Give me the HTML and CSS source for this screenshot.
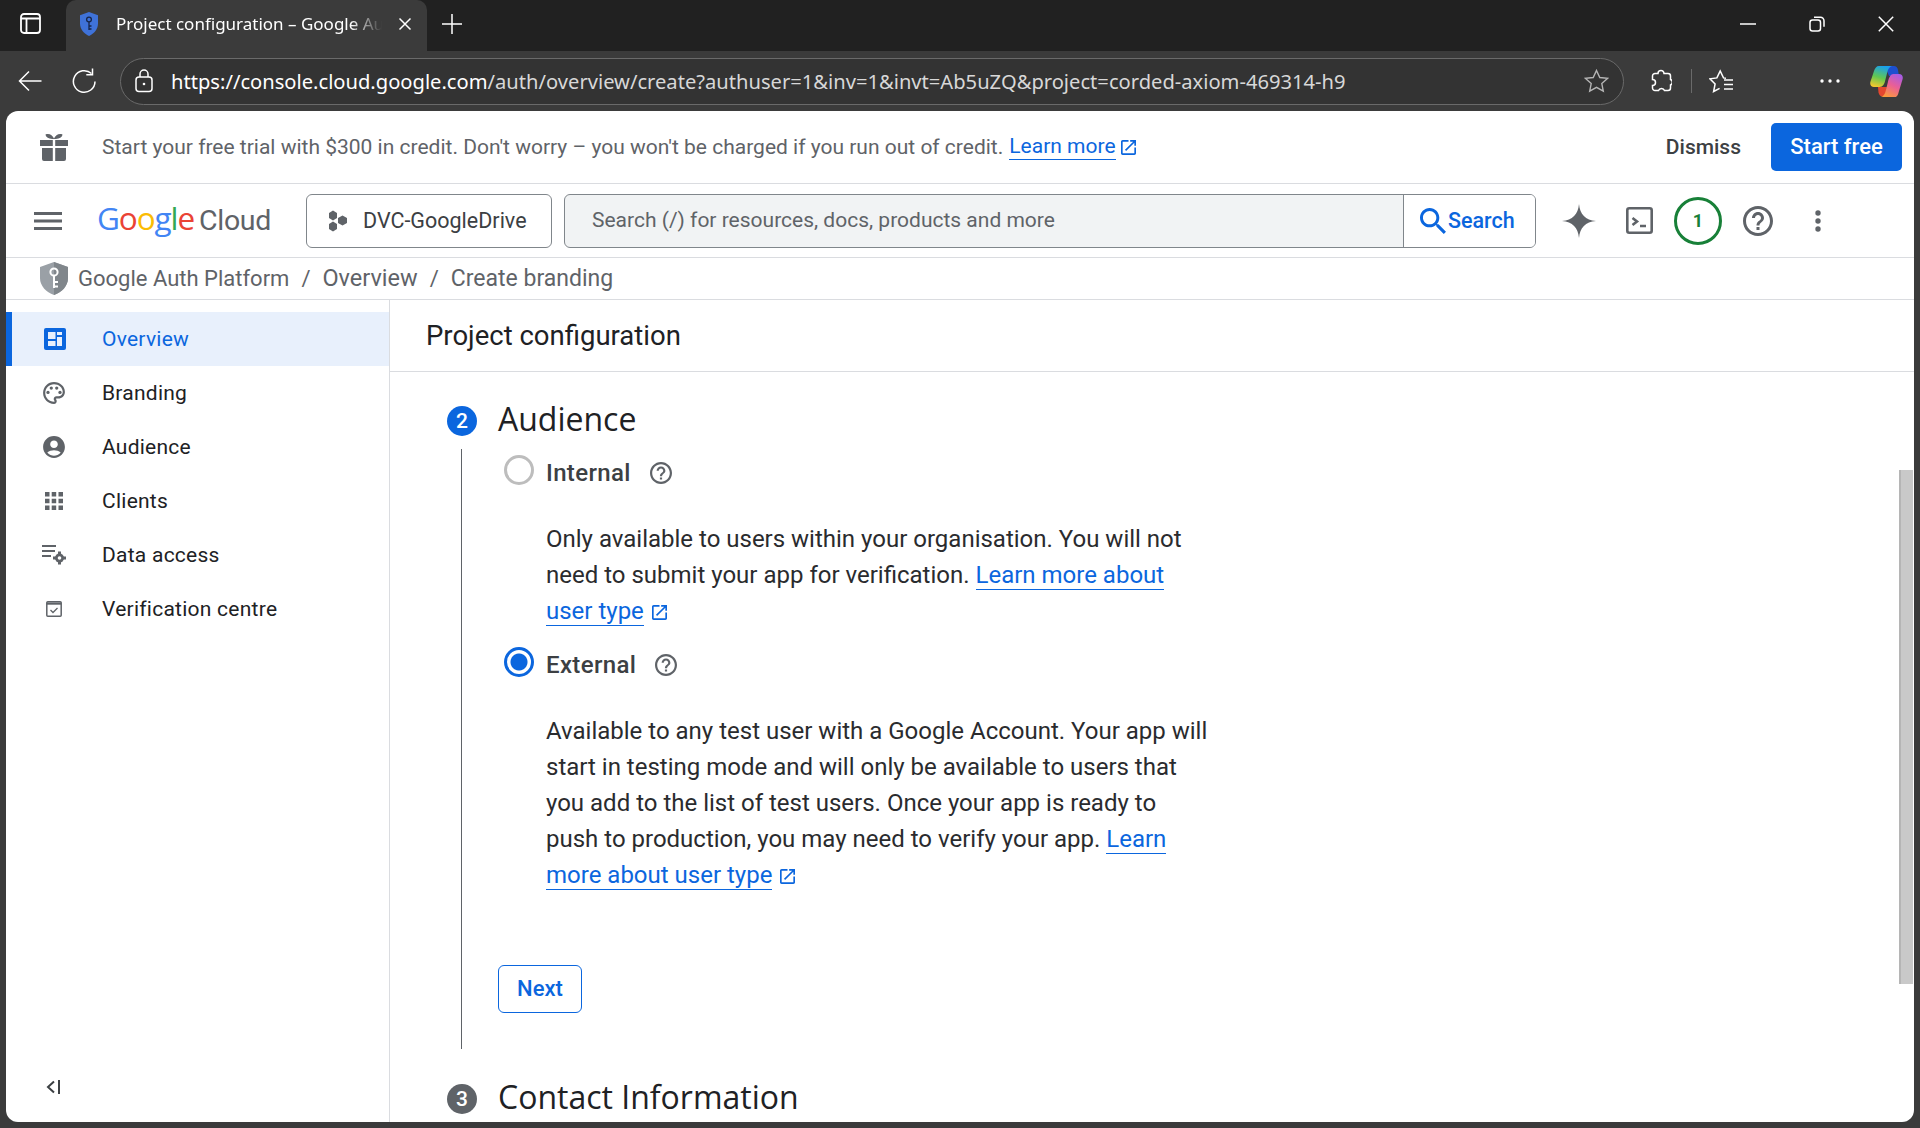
FILE: index.html
```html
<!DOCTYPE html>
<html lang="en">
    <head>
        <meta charset="utf-8" />
        <title>Project configuration</title>
        <link rel="stylesheet" href="styles.css">
    </head>
    <body>
        <svg class="defs" width="0" height="0">
            <symbol id="help" viewBox="2 2 20 20"><path d="M11 18h2v-2h-2v2zm1-16C6.48 2 2 6.48 2 12s4.48 10 10 10 10-4.48 10-10S17.52 2 12 2zm0 18c-4.41 0-8-3.59-8-8s3.59-8 8-8 8 3.59 8 8-3.59 8-8 8zm0-14c-2.21 0-4 1.79-4 4h2c0-1.1.9-2 2-2s2 .9 2 2c0 2-3 1.75-3 5h2c0-2.25 3-2.5 3-5 0-2.21-1.79-4-4-4z"/></symbol>
            <symbol id="open" viewBox="3 3 18 18"><path d="M19 19H5V5h7V3H5c-1.11 0-2 .9-2 2v14c0 1.1.89 2 2 2h14c1.1 0 2-.9 2-2v-7h-2v7zM14 3v2h3.59l-9.83 9.83 1.41 1.41L19 6.41V10h2V3h-7z"/></symbol>
        </svg>

        <!-- browser tabs -->
        <div class="tabstrip">
            <svg class="side-btn" width="21" height="21" viewBox="0 0 21 21" fill="none" stroke="#fff" stroke-width="1.8"><rect x="1" y="1" width="19" height="19" rx="3"/><path d="M1 5.5h19M6.5 5.5V20"/></svg>
            <div class="tab">
                <svg width="20" height="24" viewBox="0 0 20 24"><path d="M10 0l9 3.2v8.3c0 5.6-3.8 10.2-9 12.500-5.200-2.300-9-6.900-9-12.500V3.200z" fill="#3f72d8"/><circle cx="10" cy="7.5" r="2.4" fill="none" stroke="#16264a" stroke-width="1.3"/><path d="M10 10v8M10 14h2.500M10 17h2.500" stroke="#16264a" stroke-width="1.3"/></svg>
                <span class="tab-title">Project configuration – Google Auth Platform</span>
                <svg width="14" height="14" viewBox="0 0 14 14" stroke="#fff" stroke-width="1.5"><path d="M1.500 1.500l11 11M12.500 1.500l-11 11"/></svg>
            </div>
            <svg class="new-tab" width="22" height="22" viewBox="0 0 22 22" stroke="#fff" stroke-width="1.5"><path d="M11 1v20M1 11h20"/></svg>
            <div class="win-btns">
                <svg width="16" height="16" viewBox="0 0 16 16" stroke="#fff" stroke-width="1.5"><path d="M0 8h16"/></svg>
                <svg width="16" height="16" viewBox="0 0 16 16" fill="none" stroke="#fff" stroke-width="1.5"><rect x="1" y="4" width="10.5" height="11" rx="2.5"/><path d="M5 1.200h6.500a3.500 3.500 0 0 1 3.500 3.500v6"/></svg>
                <svg width="16" height="16" viewBox="0 0 16 16" stroke="#fff" stroke-width="1.5"><path d="M.8.8l14.400 14.400M15.200.8L.8 15.200"/></svg>
            </div>
        </div>

        <!-- address bar -->
        <div class="toolbar">
            <svg width="24" height="22" viewBox="0 0 24 22" fill="none" stroke="#fff" stroke-width="1.5"><path d="M23.500 11H1.500M11 1.500L1.500 11l9.500 9.500"/></svg>
            <svg class="reload" width="24" height="26" viewBox="0 0 24 26" fill="none" stroke="#fff" stroke-width="1.5"><path d="M19.500 5.500A10.800 10.800 0 1 0 23 13.500"/><path d="M20.500.5v6.200h-6.200"/></svg>
            <div class="urlbar">
                <svg width="18" height="24" viewBox="0 0 18 24" fill="none" stroke="#fff" stroke-width="1.5"><rect x="1" y="8" width="16" height="14.5" rx="3"/><path d="M5 8V5a4 4 0 0 1 8 0v3"/><circle cx="9" cy="15" r="1.3" fill="#fff" stroke="none"/></svg>
                <span class="url"><span class="url-host">https://console.cloud.google.com</span>/auth/overview/create?authuser=1&amp;inv=1&amp;invt=Ab5uZQ&amp;project=corded-axiom-469314-h9</span>
                <svg width="25" height="24" viewBox="0 0 25 24" fill="none" stroke="#b5b5b5" stroke-width="1.4"><path d="M12.500 1.500l3.300 7 7.700.9-5.700 5.200 1.500 7.600-6.800-3.800-6.800 3.800 1.500-7.600L1.500 9.400l7.700-.9z"/></svg>
            </div>
            <svg class="ext" width="22" height="24" viewBox="0 0 22 24" fill="none" stroke="#fff" stroke-width="1.5"><path d="M8 4.500a3 3 0 0 1 6 0h4a2.500 2.500 0 0 1 2.500 2.500v3.500a3 3 0 0 1 0 5.500V19a2.500 2.500 0 0 1-2.500 2.500h-3.500a3.200 3.200 0 0 0-6 0H5A2.500 2.500 0 0 1 2.500 19v-2.500a3 3 0 0 0 0-6V7A2.500 2.500 0 0 1 5 4.500z"/></svg>
            <span class="tool-sep"></span>
            <svg class="fav" width="25" height="24" viewBox="0 0 25 24" fill="none" stroke="#fff" stroke-width="1.5"><path d="M17 9.200l-2.500-.3-3.300-7-3.300 7-7 .9 5.200 5.200-1.500 7.500 6-3.200"/><path d="M15 11h9M15 15.500h9M15 20h9"/></svg>
            <svg class="more" width="20" height="4" viewBox="0 0 20 4" fill="#fff"><circle cx="2" cy="2" r="1.7"/><circle cx="10" cy="2" r="1.7"/><circle cx="18" cy="2" r="1.7"/></svg>
            <svg class="copilot" width="33" height="31" viewBox="0 0 33 31">
                <defs>
                    <linearGradient id="cop1" x1="0.6" y1="0" x2="0.3" y2="1"><stop offset="0" stop-color="#18a0f0"/><stop offset="0.55" stop-color="#62c850"/><stop offset="1" stop-color="#f4c82e"/></linearGradient>
                    <linearGradient id="cop2" x1="0.8" y1="0" x2="0.3" y2="1"><stop offset="0" stop-color="#a55ce6"/><stop offset="0.5" stop-color="#ea5f96"/><stop offset="1" stop-color="#fb9a3c"/></linearGradient>
                </defs>
                <path d="M8 21h9l-1 6c-.4 2-1.500 3.500-3.500 3.500-2.500 0-3.500-2-4-4z" fill="#e4472f"/>
                <path d="M15 0h9c2 0 3.500 1.500 4 4l1 6H19z" fill="#1d4fcf"/>
                <path d="M9 0h13c-2.500.8-4 3-4.800 6.500l-2 8C14.500 18 13 21 9.500 21H4C1 21-.5 18.500.5 15.500L4 5C5 2 6.500 0 9 0z" fill="url(#cop1)"/>
                <path d="M25 31H11c2.500-.8 4-3 4.800-6.500l2-8C18.500 13 20 8 23.500 8H29c3 0 4.500 2.500 3.500 5.500L29 25c-1 3.500-1.500 6-4 6z" fill="url(#cop2)"/>
            </svg>
        </div>

        <div class="page">
            <!-- free trial banner -->
            <div class="banner">
                <svg class="gift" width="28" height="28" viewBox="0 0 28 28" fill="#5f6368"><path d="M0 7h12.800v6H0zM15.200 7H28v6H15.200zM2 15h10.800v13H4a2 2 0 0 1-2-2zM15.200 15H26v11a2 2 0 0 1-2 2h-8.800z"/><path d="M13.500 6C10 6 6 5 5.500 1.500 9 0 12.500 2 14 5.500 15.500 2 19 0 22.500 1.500 22 5 18 6 14.500 6z"/></svg>
                <span class="banner-text">Start your free trial with $300 in credit. Don't worry – you won't be charged if you run out of credit.</span>
                <a class="link">Learn more</a>
                <svg class="ext-link" width="15" height="15" fill="#0b66de"><use href="#open"/></svg>
                <span class="dismiss">Dismiss</span>
                <span class="start-free">Start free</span>
            </div>

            <!-- cloud header -->
            <div class="header">
                <svg class="menu" width="28" height="18" viewBox="0 0 28 18" fill="#5f6368"><rect width="28" height="3"/><rect y="7.5" width="28" height="3"/><rect y="15" width="28" height="3"/></svg>
                <span class="logo"><span class="google"><span class="blue">G</span><span class="red">o</span><span class="yellow">o</span><span class="blue">g</span><span class="green">l</span><span class="red">e</span></span><span class="cloud">Cloud</span></span>
                <div class="project">
                    <svg width="21" height="22" viewBox="0 0 21 22" fill="#5f6368"><path d="M2 3l4-2.500L10 3v5l-4 2.500L2 8zM11 8l4.500-2.500L20 8v5l-4.500 2.500L11 13zM2 14l4-2.500L10 14v5l-4 2.500L2 19z"/></svg>
                    <span>DVC-GoogleDrive</span>
                </div>
                <div class="search">
                    <span class="search-text">Search (/) for resources, docs, products and more</span>
                    <span class="search-btn">
                        <svg width="26" height="26" viewBox="3 3 17.5 17.5" fill="#0b66de"><path d="M15.500 14h-.79l-.28-.27C15.410 12.590 16 11.110 16 9.500 16 5.910 13.090 3 9.500 3S3 5.910 3 9.500 5.910 16 9.500 16c1.610 0 3.090-.59 4.230-1.570l.27.28v.79l5 4.990L20.490 19l-4.990-5zm-6 0C7.010 14 5 11.990 5 9.500S7.010 5 9.500 5 14 7.010 14 9.500 11.990 14 9.500 14z"/></svg>
                        Search
                    </span>
                </div>
                <svg class="spark" width="34" height="34" viewBox="0 0 24 24" fill="#5f6368"><path d="M12 0C12.700 7.500 16.500 11.300 24 12 16.500 12.700 12.700 16.500 12 24 11.300 16.500 7.500 12.700 0 12 7.500 11.300 11.300 7.500 12 0z"/></svg>
                <svg class="term" width="27" height="27" viewBox="0 0 27 27" fill="none" stroke="#5f6368" stroke-width="2.6"><rect x="1.3" y="1.3" width="24.4" height="24.4" rx="2"/><path d="M6.500 11l4.500 3.500-4.500 3.500M14 19h6"/></svg>
                <span class="credit">1</span>
                <svg class="head-help" width="30" height="30" fill="#5f6368"><use href="#help"/></svg>
                <svg class="head-more" width="6" height="22" viewBox="0 0 6 22" fill="#5f6368"><circle cx="3" cy="3" r="2.7"/><circle cx="3" cy="11" r="2.7"/><circle cx="3" cy="19" r="2.7"/></svg>
            </div>

            <div class="crumbs">
                <svg width="28" height="33" viewBox="0 0 28 33"><path d="M14 0l14 5v11c0 8-6 14-14 17C6 30 0 24 0 16V5z" fill="#9aa0a6"/><path d="M14 0l14 5v11c0 8-6 14-14 17z" fill="#80868b"/><circle cx="14" cy="10" r="3.6" fill="none" stroke="#fff" stroke-width="2"/><path d="M14 13.500V26M14 20h4M14 24.500h4" stroke="#fff" stroke-width="2"/></svg>
                <span class="crumb-app">Google Auth Platform</span><span class="slash">/</span><span class="crumb-overview">Overview</span><span class="slash">/</span><span class="crumb-create">Create branding</span>
            </div>

            <div class="columns">
                <div class="sidebar">
                    <div class="nav-item active">
                        <svg width="22" height="22" viewBox="0 0 22 22"><rect width="22" height="22" rx="2" fill="#0b66de"/><path d="M4 4h7.500v7H4zM13 4h5v3h-5zM4 13h7.500v5H4zM13 9h5v9h-5z" fill="#e8f0fc"/></svg>
                        <span>Overview</span>
                    </div>
                    <div class="nav-item">
                        <svg width="24" height="24" viewBox="1 1 22 22" fill="#5f6368"><path d="M12 22C6.490 22 2 17.510 2 12S6.490 2 12 2s10 4.040 10 9c0 3.310-2.690 6-6 6h-1.770c-.28 0-.5.22-.5.5 0 .12.05.23.13.33.41.47.64 1.060.64 1.670 0 1.380-1.120 2.500-2.500 2.500zm0-18c-4.410 0-8 3.590-8 8s3.590 8 8 8c.28 0 .5-.22.5-.5 0-.16-.08-.28-.14-.35-.41-.46-.63-1.050-.63-1.650 0-1.380 1.120-2.500 2.500-2.500H16c2.210 0 4-1.790 4-4 0-3.860-3.590-7-8-7z"/><circle cx="6.5" cy="11.5" r="1.5"/><circle cx="9.5" cy="7.5" r="1.5"/><circle cx="14.5" cy="7.5" r="1.5"/><circle cx="17.5" cy="11.5" r="1.5"/></svg>
                        <span>Branding</span>
                    </div>
                    <div class="nav-item">
                        <svg width="24" height="24" viewBox="1 1 22 22" fill="#5f6368"><path d="M12 2C6.480 2 2 6.480 2 12s4.480 10 10 10 10-4.480 10-10S17.520 2 12 2zm0 4c1.930 0 3.500 1.570 3.500 3.500S13.930 13 12 13s-3.500-1.570-3.500-3.500S10.070 6 12 6zm0 14c-2.030 0-4.430-.82-6.140-2.880C7.550 15.800 9.680 15 12 15s4.450.8 6.140 2.120C16.430 19.180 14.030 20 12 20z"/></svg>
                        <span>Audience</span>
                    </div>
                    <div class="nav-item">
                        <svg width="20" height="20" viewBox="0 0 20 20" fill="#5f6368"><path d="M1 1h4.500v4.500H1zM7.700 1h4.500v4.500H7.700zM14.500 1H19v4.500h-4.500zM1 7.700h4.500v4.500H1zM7.700 7.700h4.500v4.500H7.700zM14.500 7.700H19v4.500h-4.500zM1 14.500h4.500V19H1zM7.700 14.500h4.500V19H7.700zM14.500 14.500H19V19h-4.500z"/></svg>
                        <span>Clients</span>
                    </div>
                    <div class="nav-item">
                        <svg width="24" height="20" viewBox="0 0 24 20" fill="#5f6368"><path d="M0 0h14v2H0zM0 5h13v2H0zM0 10h9v2H0z"/><circle cx="17.5" cy="13" r="4.5"/><path d="M16 6.500h3v13h-3zM11 11.500h13v3H11z"/><circle cx="17.5" cy="13" r="1.8" fill="#fff"/></svg>
                        <span>Data access</span>
                    </div>
                    <div class="nav-item">
                        <svg width="16" height="16" viewBox="0 0 16 16" fill="none" stroke="#5f6368" stroke-width="1.5"><rect x=".8" y=".8" width="14.4" height="14.4" rx="1"/><path d="M.8 2.600h14.400" stroke-width="2.2"/><path d="M4.500 9l2.500 2.500 4.500-4.500" stroke-width="1.3"/></svg>
                        <span>Verification centre</span>
                    </div>
                    <svg class="collapse" width="14" height="14" viewBox="0 0 14 14" fill="none" stroke="#3c4043" stroke-width="2"><path d="M8 1.500L2 7l6 5.500M13 0v14"/></svg>
                </div>

                <div class="main">
                    <div class="title-bar">Project configuration</div>
                    <div class="steps">
                        <div class="step-head">
                            <span class="step-num">2</span>
                            <span class="step-title">Audience</span>
                        </div>
                        <div class="step-body">
                            <div class="radio-row">
                                <span class="radio"></span>
                                <span class="radio-label">Internal</span>
                                <svg class="radio-help" width="22" height="22" fill="#5f6368"><use href="#help"/></svg>
                            </div>
                            <p class="desc first">Only available to users within your organisation. You will not need to submit your app for verification. <a class="link">Learn more about user type</a> <svg class="ext-link" width="15" height="15" fill="#0b66de"><use href="#open"/></svg></p>
                            <div class="radio-row second">
                                <span class="radio checked"></span>
                                <span class="radio-label">External</span>
                                <svg class="radio-help" width="22" height="22" fill="#5f6368"><use href="#help"/></svg>
                            </div>
                            <p class="desc">Available to any test user with a Google Account. Your app will start in testing mode and will only be available to users that you add to the list of test users. Once your app is ready to push to production, you may need to verify your app. <a class="link">Learn more about user type</a> <svg class="ext-link" width="15" height="15" fill="#0b66de"><use href="#open"/></svg></p>
                            <span class="next">Next</span>
                        </div>
                        <div class="step-head last">
                            <span class="step-num off">3</span>
                            <span class="step-title">Contact Information</span>
                        </div>
                    </div>
                    <div class="thumb"></div>
                </div>
            </div>
        </div>
    </body>
</html>
```

FILE: styles.css
```css
*{
    box-sizing: border-box;
}
html, body{
    height: 100%;
}
body{
    margin: 0;
    height: 1128px;
    overflow: hidden;
    display: flex;
    flex-direction: column;
    background: #3b3b3b;
    font-family: Roboto, sans-serif;
    font-size: 21px;
    color: #202124;
}
.defs{
    position: absolute;
}
svg{
    flex: none;
}

/* browser chrome */
.tabstrip{
    height: 51px;
    flex: none;
    display: flex;
    align-items: center;
    background: #212121;
    padding: 0 0 4px 20px;
}
.side-btn{
    margin-right: 25px;
}
.tab{
    align-self: flex-end;
    width: 361px;
    height: 51px;
    margin-bottom: -4px;
    display: flex;
    align-items: center;
    background: #3b3b3b;
    border-radius: 10px 10px 0 0;
    padding: 0 15px 4px 13px;
}
.tab-title{
    flex: 1;
    margin: 0 16px 0 17px;
    overflow: hidden;
    white-space: nowrap;
    color: #fff;
    font-family: "Noto Sans", sans-serif;
    font-size: 17px;
    -webkit-mask-image: linear-gradient(to right, #000 88%, transparent 100%);
    mask-image: linear-gradient(to right, #000 88%, transparent 100%);
}
.new-tab{
    margin-left: 14px;
}
.win-btns{
    margin-left: auto;
    display: flex;
    gap: 53px;
    padding-right: 26px;
}
.toolbar{
    height: 60px;
    flex: none;
    display: flex;
    align-items: center;
    padding: 0 17px 0 18px;
}
.reload{
    margin-left: 30px;
}
.urlbar{
    width: 1505px;
    height: 47px;
    margin-left: 24px;
    border: 1.5px solid #6a6a6a;
    border-radius: 24px;
    background: #333;
    display: flex;
    align-items: center;
    padding: 0 14px;
}
.url{
    flex: 1;
    margin-left: 18px;
    white-space: nowrap;
    color: #d8d8d8;
    font-family: "Noto Sans", sans-serif;
    font-size: 20.15px;
}
.url-host{
    color: #fff;
}
.ext{
    margin-left: 26px;
}
.tool-sep{
    width: 1.5px;
    height: 24px;
    margin-left: 19px;
    background: #6a6a6a;
}
.fav{
    margin-left: 17px;
}
.more{
    margin-left: 86px;
}
.copilot{
    margin-left: 30px;
}

/* page frame */
.page{
    flex: 1;
    margin: 0 6px 6px;
    background: #fff;
    border-radius: 12px;
    overflow: hidden;
    display: flex;
    flex-direction: column;
    min-height: 0;
}
.link{
    color: #0b66de;
    border-bottom: 1.5px solid #0b66de;
}
.ext-link{
    margin-left: 2px;
    vertical-align: -1px;
}
.banner{
    height: 73px;
    flex: none;
    display: flex;
    align-items: center;
    border-bottom: 1.5px solid #dadce0;
    padding: 0 12px 0 34px;
    color: #5f6368;
}
.banner-text{
    margin-left: 34px;
    margin-right: 6px;
}
.banner .link{
    line-height: 25px;
}
.banner .ext-link{
    margin-left: 5px;
}
.dismiss{
    margin-left: auto;
    color: #3c4043;
    font-weight: 500;
}
.start-free{
    margin-left: 30px;
    width: 131px;
    height: 48px;
    line-height: 48px;
    text-align: center;
    background: #0b66de;
    color: #fff;
    font-size: 22px;
    font-weight: 500;
    border-radius: 5px;
}

/* cloud header */
.header{
    height: 74px;
    flex: none;
    display: flex;
    align-items: center;
    border-bottom: 1.5px solid #dadce0;
    padding-left: 28px;
}
.logo{
    margin-left: 35px;
    width: 209px;
    display: flex;
    align-items: baseline;
    gap: 5px;
    padding-bottom: 6px;
    white-space: nowrap;
}
.google{
    font-family: "Open Sans", sans-serif;
    font-size: 31.5px;
    font-weight: 500;
    letter-spacing: -1.1px;
}
.blue{ color: #4285f4; }
.red{ color: #ea4335; }
.yellow{ color: #fbbc04; }
.green{ color: #34a853; }
.cloud{
    color: #5f6368;
    font-size: 28.5px;
    letter-spacing: -0.3px;
}
.project{
    width: 246px;
    height: 54px;
    display: flex;
    align-items: center;
    gap: 15px;
    padding-left: 20px;
    border: 1.5px solid #80868b;
    border-radius: 6px;
    color: #3c4043;
    font-size: 21.5px;
}
.search{
    width: 972px;
    height: 54px;
    margin-left: 12px;
    display: flex;
    border: 1.5px solid #80868b;
    border-radius: 6px;
    background: #f1f3f4;
    overflow: hidden;
}
.search-text{
    flex: 1;
    line-height: 51px;
    padding-left: 27px;
    color: #5f6368;
}
.search-btn{
    width: 132px;
    display: flex;
    align-items: center;
    gap: 2px;
    padding-left: 16px;
    background: #fff;
    border-left: 1.5px solid #80868b;
    color: #0b66de;
    font-size: 21.5px;
    font-weight: 500;
}
.spark{
    margin-left: 26px;
}
.term{
    margin-left: 30px;
}
.credit{
    width: 48px;
    height: 48px;
    margin-left: 21px;
    border: 3px solid #188038;
    border-radius: 50%;
    text-align: center;
    line-height: 41px;
    font-size: 18px;
    font-weight: 700;
    color: #188038;
}
.head-help{
    margin-left: 21px;
}
.head-more{
    margin-left: 42px;
}
.crumbs{
    height: 42px;
    flex: none;
    display: flex;
    align-items: center;
    padding: 0 0 1px 34px;
    gap: 10px;
    border-bottom: 1.5px solid #dadce0;
    color: #5f6368;
    font-size: 22px;
}
.crumb-overview{
    font-size: 23.5px;
}
.crumb-create{
    font-size: 23px;
}
.slash{
    margin: 0 2px;
}

/* sidebar */
.columns{
    flex: 1;
    display: flex;
    min-height: 0;
}
.sidebar{
    width: 384px;
    flex: none;
    padding-top: 12px;
    border-right: 1.5px solid #dadce0;
    position: relative;
    letter-spacing: 0.25px;
}
.nav-item{
    height: 54px;
    display: flex;
    align-items: center;
    position: relative;
    padding-left: 96px;
}
.nav-item svg{
    position: absolute;
    left: 48px;
    top: 27px;
    transform: translate(-50%, -50%);
}
.nav-item.active{
    background: #e8f0fc;
    border-left: 6px solid #0b66de;
    padding-left: 90px;
    color: #0b66de;
}
.nav-item.active svg{
    left: 43px;
}
.collapse{
    position: absolute;
    left: 40px;
    bottom: 28px;
}

/* main */
.main{
    flex: 1;
    position: relative;
    overflow: hidden;
}
.title-bar{
    height: 72px;
    line-height: 72px;
    padding-left: 36px;
    border-bottom: 1.5px solid #dadce0;
    font-size: 27.5px;
}
.steps{
    padding: 28px 0 0 57px;
}
.step-head{
    height: 42px;
    display: flex;
    align-items: center;
    gap: 21px;
}
.step-head.last{
    margin-top: 29px;
}
.step-num{
    width: 30px;
    height: 30px;
    flex: none;
    border-radius: 50%;
    background: #0b66de;
    color: #fff;
    text-align: center;
    line-height: 30px;
    font-size: 21px;
    font-weight: 500;
}
.step-num.off{
    background: #5f6368;
}
.step-title{
    padding-bottom: 6px;
    font-family: "Open Sans", sans-serif;
    font-size: 32px;
    color: #202124;
    white-space: nowrap;
}
.step-body{
    margin: 7px 0 0 14px;
    border-left: 1.5px solid #5f6368;
    padding: 6px 0 35px 42px;
    height: 600px;
}
.radio-row{
    height: 30px;
    display: flex;
    align-items: center;
}
.radio-row.second{
    margin-top: 18px;
}
.radio{
    width: 30px;
    height: 30px;
    flex: none;
    border: 3px solid #bdbdbd;
    border-radius: 50%;
}
.radio.checked{
    border-color: #0b66de;
    background: radial-gradient(circle, #0b66de 0 8px, #fff 9px);
}
.radio-label{
    margin: 6px 0 0 12px;
    font-size: 24px;
    font-weight: 500;
    letter-spacing: 0.35px;
    color: #3c4043;
}
.radio-help{
    margin: 6px 0 0 19px;
}
.desc{
    width: 664px;
    margin: 36px 0 0 42px;
    line-height: 36px;
    font-size: 24px;
    color: #2a2b2e;
}
.next{
    display: block;
    width: 84px;
    height: 48px;
    margin: 72px 0 0 -6px;
    border: 1.5px solid #0b66de;
    border-radius: 6px;
    line-height: 45px;
    text-align: center;
    color: #0b66de;
    font-size: 22px;
    font-weight: 500;
}
.thumb{
    position: absolute;
    right: 1px;
    top: 170px;
    width: 14px;
    height: 514px;
    background: #c9c9c9;
    border-left: 2px solid #b5b5b5;
}
```
